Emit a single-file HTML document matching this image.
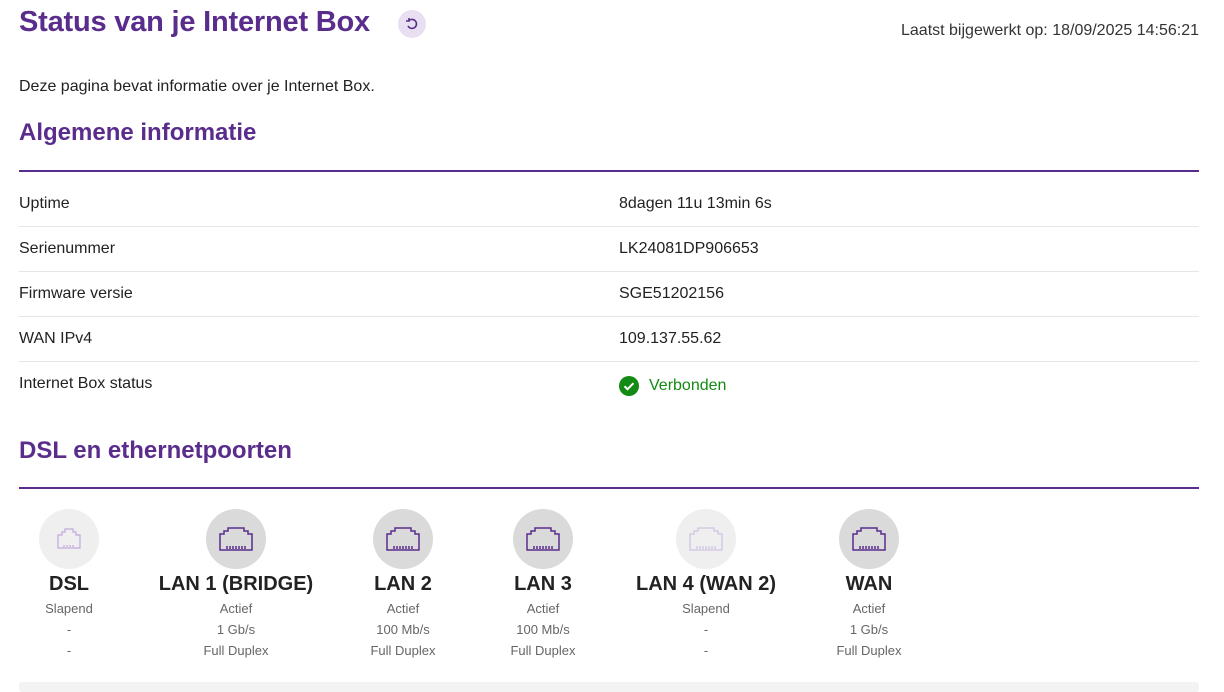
<!DOCTYPE html>
<html><head><meta charset="utf-8"><style>
*{margin:0;padding:0;box-sizing:border-box}
body{width:1224px;height:690px;background:#fff;font-family:"Liberation Sans",sans-serif;color:#222;position:relative;overflow:hidden}
.a{position:absolute;white-space:nowrap}
h1{position:absolute;left:19px;top:6px;font-size:29px;color:#5a2d8c;font-weight:bold;letter-spacing:-0.2px}
h2{position:absolute;left:19px;font-size:24px;color:#5a2d8c;font-weight:bold}
.line{position:absolute;left:19px;width:1180px;height:2px;background:#5a2d8c}
.sep{position:absolute;left:19px;width:1180px;height:1px;background:#e6e6e6}
.row{position:absolute;left:19px;font-size:16px}
.val{position:absolute;left:619px;font-size:16px}
.port{position:absolute;top:509px;width:200px;margin-left:-100px;text-align:center}
.c{width:60px;height:60px;border-radius:50%;margin:0 auto;display:flex;align-items:center;justify-content:center}
.port b{display:block;font-size:20px;margin-top:3px;color:#222;line-height:24px}
.port div.t{font-size:13px;color:#666;line-height:21px;margin-top:2px}
</style></head><body>
<h1>Status van je Internet Box</h1>
<div class="a" style="left:398px;top:10px;width:28px;height:28px;border-radius:50%;background:#e8e0f2;display:flex;align-items:center;justify-content:center">
<svg width="14" height="14" viewBox="0 0 14 14" fill="none" stroke="#5a2d8c" stroke-width="1.6"><path d="M4 3.5A4.5 4.5 0 1 1 3 9"/><path d="M4 1v3H1"/></svg></div>
<div class="a" style="right:25px;top:22px;font-size:16px;color:#333">Laatst bijgewerkt op: 18/09/2025 14:56:21</div>
<div class="a" style="left:19px;top:78px;font-size:16px">Deze pagina bevat informatie over je Internet Box.</div>
<h2 style="top:119px">Algemene informatie</h2>
<div class="line" style="top:170px"></div>
<div class="row" style="top:195px">Uptime</div><div class="val" style="top:195px">8dagen 11u 13min 6s</div>
<div class="sep" style="top:226px"></div>
<div class="row" style="top:240px">Serienummer</div><div class="val" style="top:240px">LK24081DP906653</div>
<div class="sep" style="top:271px"></div>
<div class="row" style="top:285px">Firmware versie</div><div class="val" style="top:285px">SGE51202156</div>
<div class="sep" style="top:316px"></div>
<div class="row" style="top:330px">WAN IPv4</div><div class="val" style="top:330px">109.137.55.62</div>
<div class="sep" style="top:361px"></div>
<div class="row" style="top:375px">Internet Box status</div>
<div class="a" style="left:619px;top:376px;display:flex;align-items:center;color:#138a13;font-size:16px">
<svg width="20" height="20" viewBox="0 0 20 20"><circle cx="10" cy="10" r="10" fill="#138a13"/><path d="M5.5 10.2l3 3 6-6" stroke="#fff" stroke-width="2" fill="none"/></svg><span style="margin-left:10px">Verbonden</span></div>
<h2 style="top:437px">DSL en ethernetpoorten</h2>
<div class="line" style="top:487px"></div>
<div class="port" style="left:69px"><div class="c" style="background:#efefef"><svg width="24" height="22" viewBox="0 0 24 22" fill="none" stroke="#c2a9dc" stroke-width="1.2"><path d="M1 20V7h4V4h3V1h8v3h3v3h4v13z"/><path d="M7 17v2M10 17v2M13 17v2M16 17v2"/></svg></div><b>DSL</b><div class="t">Slapend<br>-<br>-</div></div>
<div class="port" style="left:236px"><div class="c" style="background:#dadada"><svg width="34" height="24" viewBox="0 0 34 24" fill="none" stroke="#5a2d8c" stroke-width="1.5"><path d="M1 23V7h4V4h4V1h16v3h4v3h4v16z"/><path d="M8 19v3M11 19v3M14 19v3M17 19v3M20 19v3M23 19v3M26 19v3"/></svg></div><b>LAN 1 (BRIDGE)</b><div class="t">Actief<br>1 Gb/s<br>Full Duplex</div></div>
<div class="port" style="left:403px"><div class="c" style="background:#dadada"><svg width="34" height="24" viewBox="0 0 34 24" fill="none" stroke="#5a2d8c" stroke-width="1.5"><path d="M1 23V7h4V4h4V1h16v3h4v3h4v16z"/><path d="M8 19v3M11 19v3M14 19v3M17 19v3M20 19v3M23 19v3M26 19v3"/></svg></div><b>LAN 2</b><div class="t">Actief<br>100 Mb/s<br>Full Duplex</div></div>
<div class="port" style="left:543px"><div class="c" style="background:#dadada"><svg width="34" height="24" viewBox="0 0 34 24" fill="none" stroke="#5a2d8c" stroke-width="1.5"><path d="M1 23V7h4V4h4V1h16v3h4v3h4v16z"/><path d="M8 19v3M11 19v3M14 19v3M17 19v3M20 19v3M23 19v3M26 19v3"/></svg></div><b>LAN 3</b><div class="t">Actief<br>100 Mb/s<br>Full Duplex</div></div>
<div class="port" style="left:706px"><div class="c" style="background:#efefef"><svg width="34" height="24" viewBox="0 0 34 24" fill="none" stroke="#d0c2e2" stroke-width="1.3"><path d="M1 23V7h4V4h4V1h16v3h4v3h4v16z"/><path d="M8 19v3M11 19v3M14 19v3M17 19v3M20 19v3M23 19v3M26 19v3"/></svg></div><b>LAN 4 (WAN 2)</b><div class="t">Slapend<br>-<br>-</div></div>
<div class="port" style="left:869px"><div class="c" style="background:#dadada"><svg width="34" height="24" viewBox="0 0 34 24" fill="none" stroke="#5a2d8c" stroke-width="1.5"><path d="M1 23V7h4V4h4V1h16v3h4v3h4v16z"/><path d="M8 19v3M11 19v3M14 19v3M17 19v3M20 19v3M23 19v3M26 19v3"/></svg></div><b>WAN</b><div class="t">Actief<br>1 Gb/s<br>Full Duplex</div></div>
<div class="a" style="left:19px;top:682px;width:1180px;height:10px;background:#f3f3f3;border-radius:3px"></div>
</body></html>
